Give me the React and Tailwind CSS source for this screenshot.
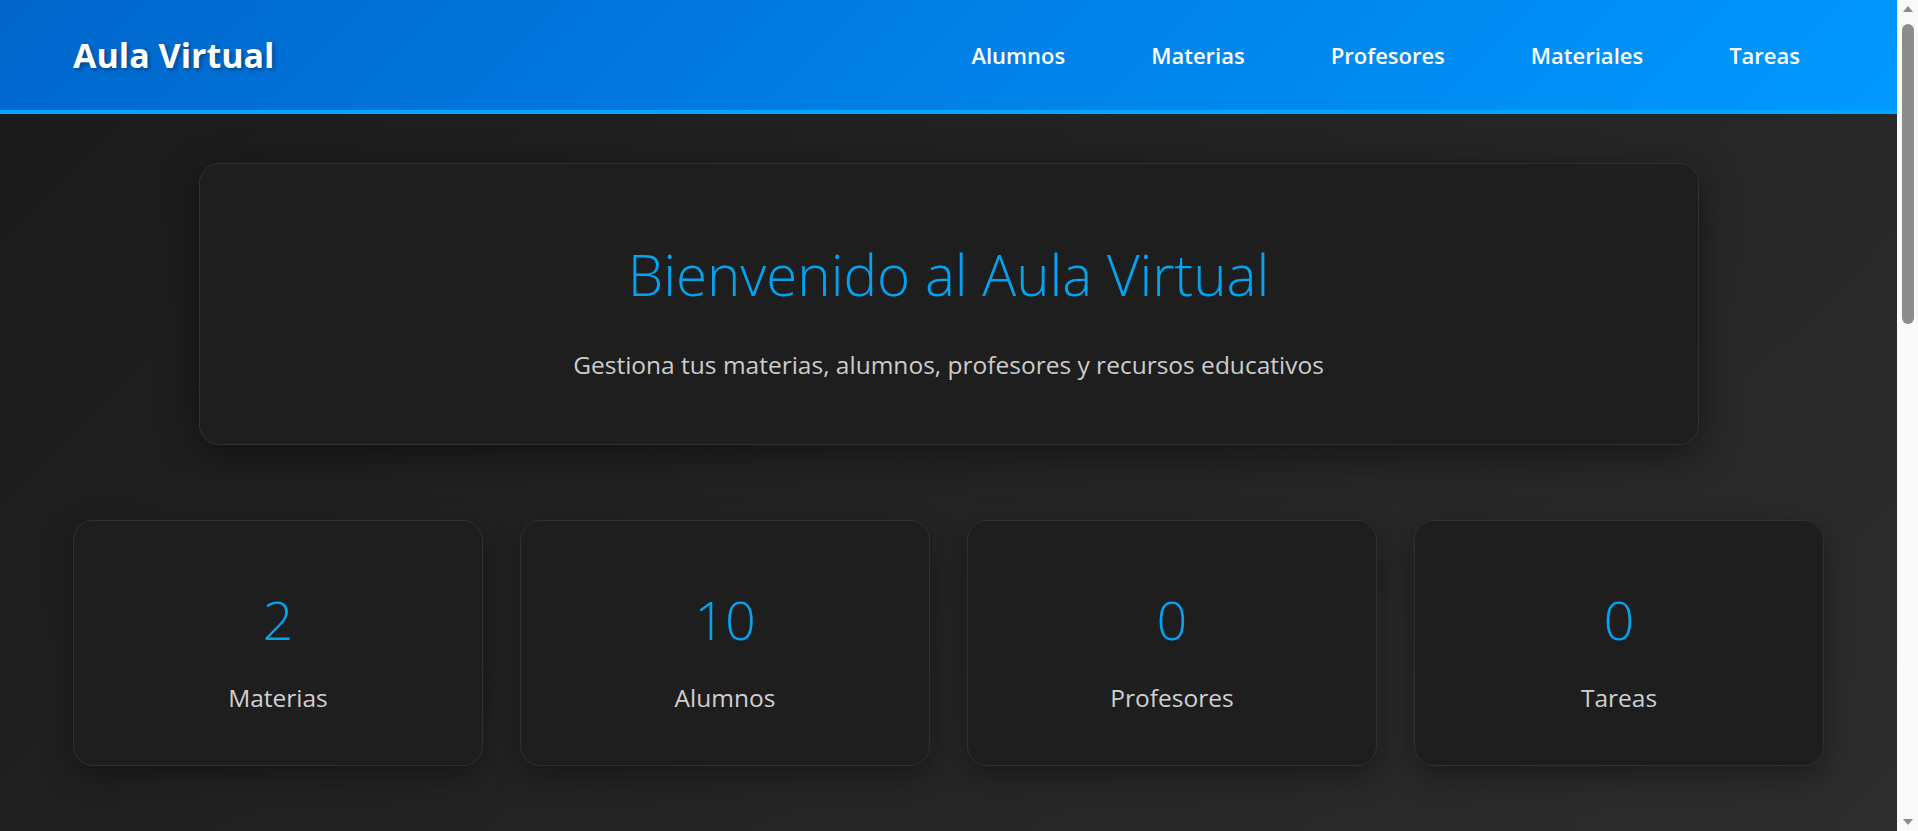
import React from "react";

const stats = [
  { n: "2", label: "Materias" },
  { n: "10", label: "Alumnos" },
  { n: "0", label: "Profesores" },
  { n: "0", label: "Tareas" },
];

const nav = ["Alumnos", "Materias", "Profesores", "Materiales", "Tareas"];

export default function App() {
  return (
    <div className="flex h-[831px] w-full overflow-hidden font-['Open_Sans','Noto_Sans',sans-serif]">
      <div className="flex flex-1 flex-col bg-[linear-gradient(135deg,#1a1a1a_0%,#2d2d2d_100%)]">
        <header className="flex h-[114px] shrink-0 items-center justify-between border-b-4 border-[#00a8ff] bg-[linear-gradient(135deg,#0066cc_0%,#0099ff_100%)] pl-[73px] pr-[97px]">
          <h1 className="text-[34px] font-bold leading-none text-white [text-shadow:2px_2px_4px_rgba(0,0,0,0.35)]">
            Aula Virtual
          </h1>
          <nav className="flex items-center gap-[86px]">
            {nav.map((item) => (
              <a key={item} className="text-[22px] font-semibold leading-none text-white">
                {item}
              </a>
            ))}
          </nav>
        </header>

        <main className="flex flex-col px-[73px] pt-[49px]">
          <section className="mx-auto flex h-[282px] w-[1500px] flex-col items-center rounded-[20px] border border-[#303030] bg-[#1e1e1e] pt-[77px] shadow-[0_10px_40px_rgba(0,0,0,0.45)]">
            <h2 className="text-[56.5px] font-light leading-[1.2] text-[#02a4f2]">
              Bienvenido al Aula Virtual
            </h2>
            <p className="mt-[38px] text-[24.5px] leading-[1.5] text-[#cccccc]">
              Gestiona tus materias, alumnos, profesores y recursos educativos
            </p>
          </section>

          <section className="mt-[75px] grid grid-cols-4 gap-[37px]">
            {stats.map((s) => (
              <div
                key={s.label}
                className="flex h-[246px] flex-col items-center rounded-[20px] border border-[#303030] bg-[#1e1e1e] pt-[66px] shadow-[0_10px_30px_rgba(0,0,0,0.35)]"
              >
                <div className="text-[54px] font-light leading-[1.2] text-[#02a4f2]">{s.n}</div>
                <div className="mt-[28px] text-[24.5px] leading-[1.5] text-[#d0d0d0]">{s.label}</div>
              </div>
            ))}
          </section>
        </main>
      </div>

      <aside className="flex h-[831px] w-[21px] shrink-0 flex-col items-center bg-[#f9f9f9]">
        <svg width="12" height="8" viewBox="0 0 12 8" className="mt-[5px]">
          <path d="M6 1 L11 7 L1 7 Z" fill="#8a8a8a" />
        </svg>
        <div className="mt-[11px] h-[300px] w-[12px] rounded-full bg-[#8c8c8c]" />
        <div className="flex-1" />
        <svg width="12" height="8" viewBox="0 0 12 8" className="mb-[5px]">
          <path d="M1 1 L11 1 L6 7 Z" fill="#8a8a8a" />
        </svg>
      </aside>
    </div>
  );
}
